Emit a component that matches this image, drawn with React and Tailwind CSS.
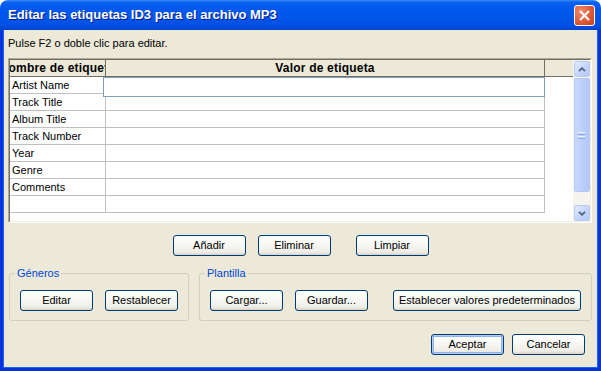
import React from 'react';

const rows = ['Artist Name', 'Track Title', 'Album Title', 'Track Number', 'Year', 'Genre', 'Comments', ''];

const Btn = ({ children, className = 'w-[73px]', isDefault = false }) => (
  <button
    className={`${className} h-[21px] shrink-0 rounded-[3px] border border-[#003c74] bg-[linear-gradient(to_bottom,#ffffff_0%,#f7f7f4_45%,#efede6_85%,#d8d2c6_100%)] text-[11px] leading-none text-black ${
      isDefault ? 'shadow-[inset_0_0_0_1px_#b4cbf5,inset_0_0_0_2px_#8fb0ee]' : ''
    }`}
  >
    {children}
  </button>
);

const Arrow = ({ down }) => (
  <svg width="8" height="5" viewBox="0 0 8 5" className={down ? 'rotate-180' : ''}>
    <path d="M1 4.2 L4 1.2 L7 4.2" fill="none" stroke="#4d6185" strokeWidth="1.8" />
  </svg>
);

const ScrollBtn = ({ down }) => (
  <div className="flex h-[16px] w-[16px] items-center justify-center rounded-[2px] border border-[#b9ccf2] bg-[linear-gradient(to_bottom_right,#e3ebfd,#c2d3fb_60%,#b4c8f6)]">
    <Arrow down={down} />
  </div>
);

const Scrollbar = () => (
  <div className="flex h-full w-[17px] shrink-0 flex-col items-center bg-[#f5f4ef] pt-[1px]">
    <ScrollBtn />
    <div className="mt-[1px] flex h-[114px] w-[16px] flex-col items-center justify-center gap-[1px] rounded-[2px] border border-[#b4c8f2] bg-[linear-gradient(to_right,#c9d8fc,#bccffb_50%,#b3c8f7)]">
      <div className="h-[1px] w-[7px] bg-[#eef4fe]" />
      <div className="h-[1px] w-[7px] bg-[#8cabf0]" />
      <div className="h-[1px] w-[7px] bg-[#eef4fe]" />
      <div className="h-[1px] w-[7px] bg-[#8cabf0]" />
    </div>
    <div className="flex-1" />
    <ScrollBtn down />
  </div>
);

const Group = ({ title, className, children }) => (
  <fieldset className={`${className} rounded-[3px] border border-[#d0d0bf] pb-[9px]`}>
    <legend className="ml-[5px] px-[2px] text-[11px] leading-[14px] text-[#0046d5]">{title}</legend>
    <div className="mt-[10px] flex pl-[10px]">{children}</div>
  </fieldset>
);

export default function App() {
  return (
    <div className="h-[371px] w-[601px] bg-white font-['Liberation_Sans',Arial,sans-serif] text-black">
      <div className="flex h-full flex-col overflow-hidden rounded-t-[8px]">
        {/* title bar */}
        <div className="flex h-[30px] shrink-0 items-center bg-[linear-gradient(to_bottom,#3d8cf5_0%,#0a62f2_8%,#0058ee_30%,#0055ea_60%,#0050e2_85%,#0042cc_100%)] pl-[8px] pr-[6px]">
          <span className="flex-1 text-[13px] font-bold text-white [text-shadow:1px_1px_#0a1a8a]">
            Editar las etiquetas ID3 para el archivo MP3
          </span>
          <div className="flex h-[21px] w-[21px] items-center justify-center rounded-[3px] border border-white bg-[radial-gradient(circle_at_30%_30%,#f08b6b,#de5a38_55%,#c43d1c)]">
            <svg width="13" height="13" viewBox="0 0 13 13">
              <path d="M2 2 L11 11 M11 2 L2 11" stroke="white" strokeWidth="2.2" />
            </svg>
          </div>
        </div>

        {/* window frame */}
        <div className="flex flex-1 flex-col bg-[#0734d8] px-[3px] pb-[3px]">
          <div className="flex flex-1 flex-col border-x border-b border-[#1d63ef] bg-[#ece9d8]">
            <div className="mt-[6px] pl-[4px] text-[11px] leading-[14px]">Pulse F2 o doble clic para editar.</div>

            {/* tag table */}
            <div className="ml-[4px] mr-[5px] mt-[8px] h-[165px] border border-b-white border-l-[#aca899] border-r-white border-t-[#aca899]">
              <div className="flex h-full border border-b-[#f1efe2] border-l-[#716f64] border-r-[#f1efe2] border-t-[#716f64] bg-white">
                <div className="relative flex flex-1 flex-col">
                  <div className="flex h-[17px] shrink-0 border-b border-[#716f64] bg-[#ece9d8] text-[12px] font-bold tracking-[0.2px]">
                    <div className="flex w-[96px] shrink-0 items-center justify-center overflow-hidden whitespace-nowrap border-r border-[#716f64]">
                      Nombre de etiqueta
                    </div>
                    <div className="flex w-[439px] shrink-0 items-center justify-center border-r border-[#716f64]">
                      Valor de etiqueta
                    </div>
                    <div className="flex-1" />
                  </div>
                  {rows.map((r, i) => (
                    <div key={i} className="flex h-[17px] shrink-0 text-[11px]">
                      <div className="flex w-[96px] shrink-0 items-center border-b border-r border-[#c0c0c0] pl-[2px]">{r}</div>
                      <div className="w-[439px] shrink-0 border-b border-r border-[#c0c0c0]" />
                    </div>
                  ))}
                  <div className="absolute left-[93px] top-[17px] h-[20px] w-[442px] border border-[#7f9db9] bg-white" />
                </div>
                <Scrollbar />
              </div>
            </div>

            {/* row buttons */}
            <div className="mt-[12px] flex justify-center">
              <Btn>Añadir</Btn>
              <Btn className="ml-[12px] w-[73px]">Eliminar</Btn>
              <Btn className="ml-[25px] w-[73px]">Limpiar</Btn>
            </div>

            {/* groups */}
            <div className="mt-[10px] flex gap-[10px] pl-[5px]">
              <Group title="Géneros" className="w-[180px]">
                <Btn>Editar</Btn>
                <Btn className="ml-[12px] w-[73px]">Restablecer</Btn>
              </Group>
              <Group title="Plantilla" className="w-[393px]">
                <Btn>Cargar...</Btn>
                <Btn className="ml-[12px] w-[73px]">Guardar...</Btn>
                <Btn className="ml-[25px] w-[188px]">Establecer valores predeterminados</Btn>
              </Group>
            </div>

            {/* dialog buttons */}
            <div className="mt-[13px] flex justify-end gap-[8px] pr-[12px]">
              <Btn isDefault>Aceptar</Btn>
              <Btn>Cancelar</Btn>
            </div>
          </div>
        </div>
      </div>
    </div>
  );
}
